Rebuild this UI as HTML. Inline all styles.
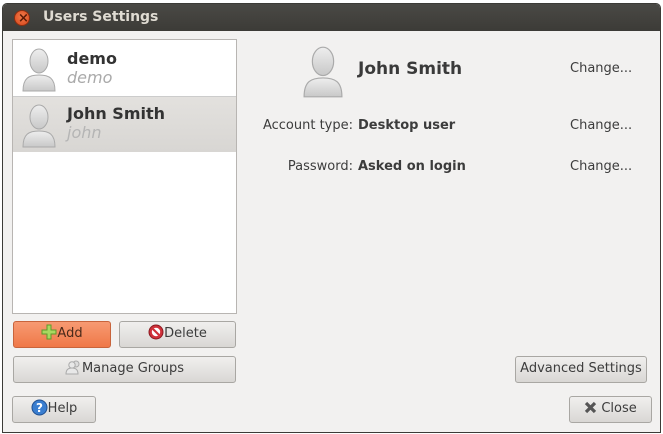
<!DOCTYPE html>
<html><head><style>
*{box-sizing:border-box;margin:0;padding:0}
body{width:663px;height:434px;background:#fff;font-family:"DejaVu Sans","Liberation Sans",sans-serif;font-size:13px;color:#3c3c3c;position:relative;overflow:hidden}
.win{position:absolute;left:2px;top:3px;width:659px;height:430px;background:#f2f1f0;border:1px solid #3c3b37;border-radius:5px 5px 0 0;overflow:hidden}
.title{position:absolute;left:0;top:0;width:100%;height:27px;background:linear-gradient(#4a4945,#3c3b37);color:#dfdbd2;font-weight:bold;font-size:14px;line-height:27px;padding-left:40px}
.close{position:absolute;left:11px;top:6px;width:16px;height:16px;border-radius:50%;background:radial-gradient(circle at 50% 40%,#f57c4a,#d4441a);border:1px solid #8a2e10}
.close:after{content:"×";position:absolute;left:3px;top:-6px;color:#5a1a05;font-size:13px}
.abs{position:absolute}
.list{left:9px;top:35px;width:225px;height:275px;background:#fff;border:1px solid #b8b5b2}
.row{position:absolute;left:0;width:223px;height:56px}
.btn{position:absolute;border:1px solid #a9a7a3;border-radius:3px;background:linear-gradient(#f0efee,#d9d7d4);text-align:center;line-height:24px;color:#3c3c3c}
.name{position:absolute;left:54px;font-weight:bold;font-size:16px;color:#333}
.login{position:absolute;left:54px;font-style:italic;font-size:16px;color:#aaa}
.lbl{position:absolute;text-align:right;font-size:13px}
.b{font-weight:bold}
</style></head><body>
<div class="win">
<div class="title"><div class="close"></div>Users Settings</div>
<div class="abs list">
 <div class="row" style="top:0">
  <svg class="abs" style="left:8px;top:8px" width="36" height="44" viewBox="0 0 36 44"><defs><linearGradient id="g" x1="0" y1="0" x2="0" y2="1"><stop offset="0" stop-color="#eee"/><stop offset="1" stop-color="#c8c8c8"/></linearGradient></defs><ellipse cx="18" cy="13" rx="9" ry="12" fill="url(#g)" stroke="#aaa"/><path d="M2 43 C2 30 8 27 18 27 C28 27 34 30 34 43 Z" fill="url(#g)" stroke="#aaa"/></svg>
  <div class="name" style="top:9px">demo</div><div class="login" style="top:28px">demo</div>
 </div>
 <div class="row" style="top:56px;background:linear-gradient(#e3e1de,#d8d6d3);border-top:1px solid #ccc">
  <svg class="abs" style="left:8px;top:7px" width="36" height="44" viewBox="0 0 36 44"><ellipse cx="18" cy="13" rx="9" ry="12" fill="url(#g)" stroke="#aaa"/><path d="M2 43 C2 30 8 27 18 27 C28 27 34 30 34 43 Z" fill="url(#g)" stroke="#aaa"/></svg>
  <div class="name" style="top:7px">John Smith</div><div class="login" style="top:26px;color:#b5b5b5">john</div>
 </div>
</div>
<svg class="abs" style="left:297px;top:42px" width="46" height="52" viewBox="0 0 36 44"><ellipse cx="18" cy="13" rx="9" ry="12" fill="url(#g)" stroke="#aaa"/><path d="M2 43 C2 30 8 27 18 27 C28 27 34 30 34 43 Z" fill="url(#g)" stroke="#aaa"/></svg>
<div class="abs b" style="left:355px;top:55px;font-size:17px;color:#3a3a3a">John Smith</div>
<div class="abs" style="left:567px;top:57px">Change...</div>
<div class="lbl" style="left:199px;width:151px;top:114px">Account type:</div>
<div class="abs b" style="left:355px;top:114px">Desktop user</div>
<div class="abs" style="left:567px;top:114px">Change...</div>
<div class="lbl" style="left:199px;width:151px;top:155px">Password:</div>
<div class="abs b" style="left:355px;top:155px">Asked on login</div>
<div class="abs" style="left:567px;top:155px">Change...</div>

<div class="btn" style="left:10px;top:317px;width:98px;height:27px;background:linear-gradient(#f79a72,#ef7848);border-color:#c8643c;color:#4a2a1a">
 <svg style="vertical-align:-3px" width="16" height="16" viewBox="0 0 16 16"><path d="M6 1h4v5h5v4h-5v5H6v-5H1V6h5z" fill="#a8d860" stroke="#5e9a2a"/></svg>Add</div>
<div class="btn" style="left:116px;top:317px;width:117px;height:27px">
 <svg style="vertical-align:-3px" width="16" height="16" viewBox="0 0 16 16"><circle cx="8" cy="8" r="7" fill="#d0313a" stroke="#8a1a20"/><circle cx="8" cy="8" r="4.2" fill="#fff"/><path d="M5 5l6 6" stroke="#d0313a" stroke-width="2.2"/></svg>Delete</div>
<div class="btn" style="left:10px;top:352px;width:223px;height:27px">
 <svg style="vertical-align:-3px" width="17" height="16" viewBox="0 0 17 16"><circle cx="11" cy="5" r="3" fill="#ddd" stroke="#aaa"/><circle cx="7" cy="6" r="3.2" fill="#e8e8e8" stroke="#aaa"/><path d="M1 15c0-5 3-6 6-6s6 1 6 6z" fill="#e8e8e8" stroke="#aaa"/></svg>Manage Groups</div>
<div class="btn" style="left:9px;top:392px;width:84px;height:27px">
 <svg style="vertical-align:-4px" width="17" height="17" viewBox="0 0 17 17"><circle cx="8.5" cy="8.5" r="7.5" fill="#3a7ed0" stroke="#1f4f90"/><text x="8.5" y="13" text-anchor="middle" font-size="12" font-weight="bold" fill="#fff" font-family="DejaVu Sans">?</text></svg>Help</div>
<div class="btn" style="left:512px;top:352px;width:132px;height:27px">Advanced Settings</div>
<div class="btn" style="left:566px;top:392px;width:83px;height:27px">
 <svg style="vertical-align:-2px" width="13" height="13" viewBox="0 0 13 13"><path d="M2 2l9 9M11 2l-9 9" stroke="#555" stroke-width="3.2"/></svg> Close</div>
</div>
</body></html>
